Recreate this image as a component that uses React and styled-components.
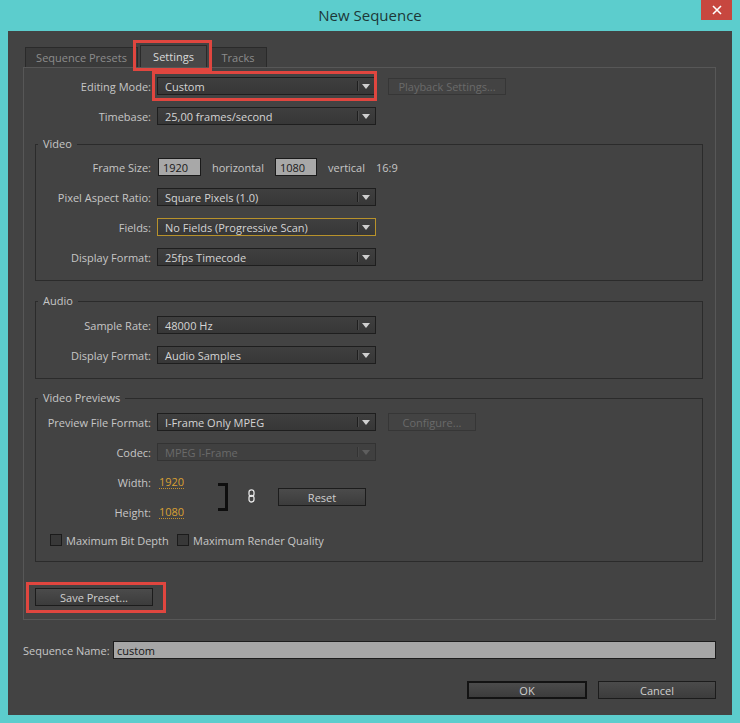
import React from 'react';
import styled, { createGlobalStyle } from 'styled-components';

const GlobalStyle = createGlobalStyle`
  * { box-sizing: border-box; }
  html, body {
    margin: 0;
    padding: 0;
    background: #5ccdcd;
  }
  body {
    font-family: "Open Sans", "Noto Sans", Arial, sans-serif;
    font-size: 11px;
  }
`;

const Window = styled.div`
  width: 740px;
  height: 723px;
  background: #5ccdcd;
  display: flex;
  flex-direction: column;
`;

const TitleBar = styled.div`
  height: 31px;
  display: grid;
  grid-template-columns: 1fr auto 1fr;
  align-items: start;
`;

const Title = styled.div`
  grid-column: 2;
  line-height: 31px;
  font-size: 15px;
  color: #1d3838;
`;

const CloseButton = styled.div`
  grid-column: 3;
  justify-self: end;
  margin-right: 8px;
  width: 31px;
  height: 20px;
  background: #c7473f;
  display: flex;
  align-items: center;
  justify-content: center;
`;

const Body = styled.div`
  margin: 0 8px;
  height: 684px;
  background: #434343;
  padding: 13px 16px 0 15px;
  display: flex;
  flex-direction: column;
  color: #c6c6c6;
`;

const TabStrip = styled.div`
  display: flex;
  align-items: flex-end;
  height: 23px;
  padding-left: 2px;
  gap: 2px;
`;

const Tab = styled.div`
  width: ${p => p.$w}px;
  height: ${p => (p.$active ? 22 : 20)}px;
  border: 1px solid #2a2a2a;
  border-bottom: none;
  background: ${p => (p.$active ? '#484848' : '#3a3a3a')};
  color: ${p => (p.$active ? '#dadada' : '#8c8c8c')};
  display: flex;
  align-items: center;
  justify-content: center;
  font-size: 11px;
`;

// red annotation frames drawn over the screenshot
const Highlight = styled.div`
  position: relative;
  display: inline-flex;
  &::after {
    content: '';
    position: absolute;
    top: ${p => p.$t}px;
    right: ${p => p.$r}px;
    bottom: ${p => p.$b}px;
    left: ${p => p.$l}px;
    border: 3px solid #e0463f;
    pointer-events: none;
  }
`;

const Panel = styled.div`
  height: 553px;
  border: 1px solid #575757;
  padding: 9px 0 0 0;
  display: flex;
  flex-direction: column;
`;

const Row = styled.div`
  display: flex;
  align-items: center;
  height: 18px;
  margin-top: ${p => p.$mt ?? 12}px;
`;

const Label = styled.div`
  flex: none;
  width: ${p => p.$w}px;
  padding-right: 6px;
  text-align: right;
  white-space: nowrap;
  color: #c6c6c6;
`;

const Select = styled.div`
  flex: none;
  width: 219px;
  height: 18px;
  border: 1px solid ${p => (p.$focus ? '#b8922b' : p.$disabled ? '#333' : '#1e1e1e')};
  background: ${p => (p.$disabled ? '#404040' : 'linear-gradient(#3f3f3f, #373737)')};
  color: ${p => (p.$disabled ? '#6a6a6a' : '#d4d4d4')};
  display: flex;
  align-items: center;
`;

const SelectValue = styled.span`
  flex: 1;
  padding-left: 7px;
  white-space: nowrap;
`;

const SelectArrow = styled.span`
  flex: none;
  width: 18px;
  height: 100%;
  display: flex;
  align-items: center;
  justify-content: center;
  position: relative;
  &::before {
    content: '';
    position: absolute;
    left: 0;
    top: 3px;
    bottom: 3px;
    border-left: 1px solid ${p => (p.$disabled ? '#333' : '#1e1e1e')};
    box-shadow: 1px 0 0 ${p => (p.$disabled ? '#484848' : '#4c4c4c')};
  }
  &::after {
    content: '';
    border-left: 4px solid transparent;
    border-right: 4px solid transparent;
    border-top: 5px solid ${p => (p.$disabled ? '#5e5e5e' : '#cfcfcf')};
  }
`;

const Button = styled.div`
  flex: none;
  width: ${p => p.$w}px;
  height: ${p => p.$h ?? 18}px;
  margin-left: ${p => p.$ml ?? 0}px;
  border: ${p => (p.$default ? '2px solid #131313' : p.$disabled ? '1px solid #363636' : '1px solid #1c1c1c')};
  background: ${p => (p.$disabled ? '#434343' : 'linear-gradient(#4b4b4b, #3c3c3c)')};
  color: ${p => (p.$disabled ? '#6a6a6a' : '#cfcfcf')};
  display: flex;
  align-items: center;
  justify-content: center;
  white-space: nowrap;
`;

const Group = styled.fieldset`
  margin: ${p => p.$mt}px 12px 0 11px;
  padding: ${p => p.$pt ?? 8}px 0 ${p => p.$pb ?? 14}px 0;
  border: 1px solid #2b2b2b;
  min-width: 0;
`;

const Legend = styled.legend`
  margin-left: 2px;
  padding: 0 5px;
  line-height: 14px;
  color: #c6c6c6;
`;

const NumberBox = styled.div`
  flex: none;
  width: ${p => p.$w}px;
  height: 18px;
  background: #a8a8a8;
  border: 1px solid #1a1a1a;
  color: #1a1a1a;
  padding-left: 4px;
  display: flex;
  align-items: center;
`;

const Inline = styled.div`
  display: flex;
  align-items: center;
  gap: 11px;
  margin-left: 1px;
`;

const Plain = styled.span`
  color: #c6c6c6;
`;

const SizeBlock = styled.div`
  display: flex;
  align-items: center;
  margin-top: 12px;
`;

const SizeColumn = styled.div`
  width: 182px;
  display: flex;
  flex-direction: column;
  gap: 12px;
`;

const Hot = styled.span`
  margin-left: 2px;
  color: #d9a133;
  border-bottom: 1px dotted #c4902c;
  line-height: 13px;
`;

const Bracket = styled.div`
  width: 10px;
  height: 28px;
  border: 3px solid #0e0e0e;
  border-left: none;
`;

const LinkIcon = styled.svg`
  margin-left: 20px;
  margin-top: -3px;
`;

const CheckRow = styled.div`
  display: flex;
  align-items: center;
  height: 18px;
  margin-top: 10px;
  padding-left: 14px;
`;

const CheckItem = styled.label`
  flex: none;
  width: ${p => (p.$w ? `${p.$w}px` : 'auto')};
  display: flex;
  align-items: center;
  gap: 4px;
  color: #c6c6c6;
`;

const Box = styled.span`
  width: 12px;
  height: 12px;
  border: 1px solid #1b1b1b;
  background: #383838;
`;

const PresetArea = styled.div`
  margin: 26px 0 0 11px;
`;

const NameRow = styled.div`
  display: flex;
  align-items: center;
  margin-top: 21px;
`;

const NameLabel = styled.span`
  flex: none;
  width: 90px;
  white-space: nowrap;
  color: #c6c6c6;
`;

const NameInput = styled.div`
  flex: 1;
  height: 18px;
  background: #a6a6a6;
  border: 1px solid #1c1c1c;
  color: #151515;
  padding-left: 3px;
  display: flex;
  align-items: center;
`;

const Footer = styled.div`
  display: flex;
  justify-content: flex-end;
  gap: 11px;
  margin-top: 22px;
`;

function Dropdown({ value, focus, disabled }) {
  return (
    <Select $focus={focus} $disabled={disabled}>
      <SelectValue>{value}</SelectValue>
      <SelectArrow $disabled={disabled} />
    </Select>
  );
}

export default function App() {
  return (
    <Window>
      <GlobalStyle />
      <TitleBar>
        <Title>New Sequence</Title>
        <CloseButton>
          <svg width="10" height="10" viewBox="0 0 10 10">
            <path d="M1 1L9 9M9 1L1 9" stroke="#fff" strokeWidth="1.6" />
          </svg>
        </CloseButton>
      </TitleBar>

      <Body>
        <TabStrip>
          <Tab $w={113}>Sequence Presets</Tab>
          <Highlight $t={-5} $r={-5} $b={-4} $l={-7}>
            <Tab $w={67} $active>Settings</Tab>
          </Highlight>
          <Tab $w={58}>Tracks</Tab>
        </TabStrip>

        <Panel>
          <Row $mt={0}>
            <Label $w={133}>Editing Mode:</Label>
            <Highlight $t={-6} $r={-1} $b={-6} $l={-5}>
              <Dropdown value="Custom" />
            </Highlight>
            <Button $w={118} $h={17} $ml={12} $disabled>Playback Settings...</Button>
          </Row>
          <Row>
            <Label $w={133}>Timebase:</Label>
            <Dropdown value="25,00 frames/second" />
          </Row>

          <Group $mt={12} $pt={7}>
            <Legend>Video</Legend>
            <Row $mt={0}>
              <Label $w={121}>Frame Size:</Label>
              <Inline>
                <NumberBox $w={43}>1920</NumberBox>
                <Plain>horizontal</Plain>
                <NumberBox $w={42}>1080</NumberBox>
                <Plain>vertical</Plain>
                <Plain>16:9</Plain>
              </Inline>
            </Row>
            <Row>
              <Label $w={121}>Pixel Aspect Ratio:</Label>
              <Dropdown value="Square Pixels (1.0)" />
            </Row>
            <Row>
              <Label $w={121}>Fields:</Label>
              <Dropdown value="No Fields (Progressive Scan)" focus />
            </Row>
            <Row>
              <Label $w={121}>Display Format:</Label>
              <Dropdown value="25fps Timecode" />
            </Row>
          </Group>

          <Group $mt={13}>
            <Legend>Audio</Legend>
            <Row $mt={0}>
              <Label $w={121}>Sample Rate:</Label>
              <Dropdown value="48000 Hz" />
            </Row>
            <Row>
              <Label $w={121}>Display Format:</Label>
              <Dropdown value="Audio Samples" />
            </Row>
          </Group>

          <Group $mt={12} $pb={12}>
            <Legend>Video Previews</Legend>
            <Row $mt={0}>
              <Label $w={121}>Preview File Format:</Label>
              <Dropdown value="I-Frame Only MPEG" />
              <Button $w={88} $ml={12} $disabled>Configure...</Button>
            </Row>
            <Row>
              <Label $w={121}>Codec:</Label>
              <Dropdown value="MPEG I-Frame" disabled />
            </Row>
            <SizeBlock>
              <SizeColumn>
                <Row $mt={0}>
                  <Label $w={121}>Width:</Label>
                  <Hot>1920</Hot>
                </Row>
                <Row $mt={0}>
                  <Label $w={121}>Height:</Label>
                  <Hot>1080</Hot>
                </Row>
              </SizeColumn>
              <Bracket />
              <LinkIcon width="7" height="14" viewBox="0 0 7 14">
                <rect x="1" y="0.8" width="5" height="6.6" rx="2.4" fill="none" stroke="#e6e6e6" strokeWidth="1.3" />
                <rect x="1" y="6.4" width="5" height="6.6" rx="2.4" fill="none" stroke="#e6e6e6" strokeWidth="1.3" />
              </LinkIcon>
              <Button $w={88} $ml={23}>Reset</Button>
            </SizeBlock>
            <CheckRow>
              <CheckItem $w={127}><Box />Maximum Bit Depth</CheckItem>
              <CheckItem><Box />Maximum Render Quality</CheckItem>
            </CheckRow>
          </Group>

          <PresetArea>
            <Highlight $t={-6} $r={-13} $b={-7} $l={-9}>
              <Button $w={118}>Save Preset...</Button>
            </Highlight>
          </PresetArea>
        </Panel>

        <NameRow>
          <NameLabel>Sequence Name:</NameLabel>
          <NameInput>custom</NameInput>
        </NameRow>

        <Footer>
          <Button $w={120} $default>OK</Button>
          <Button $w={118}>Cancel</Button>
        </Footer>
      </Body>
    </Window>
  );
}
